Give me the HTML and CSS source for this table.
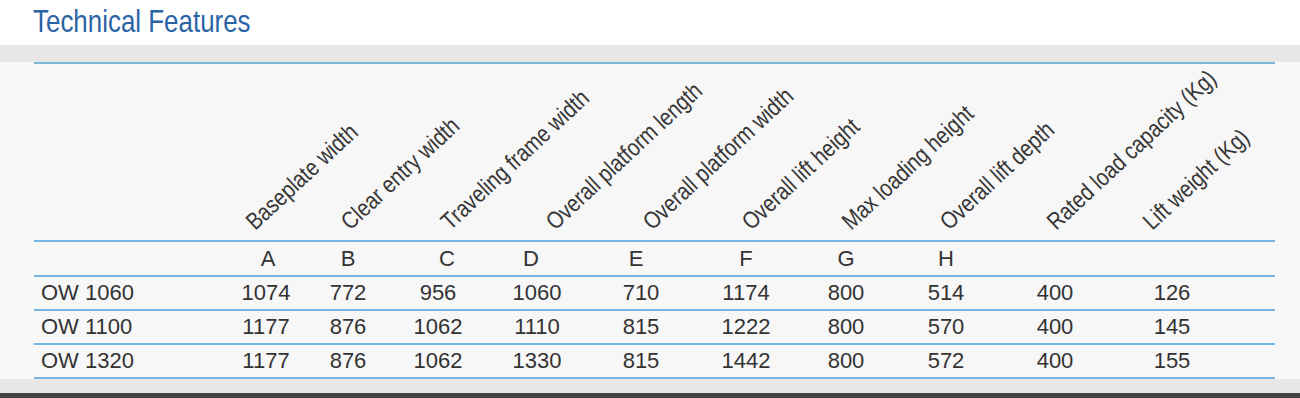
FILE: index.html
```html
<!DOCTYPE html>
<html lang="en">
<head>
<meta charset="utf-8">
<title>Technical Features</title>
<link rel="stylesheet" href="styles.css">
</head>
<body>
<header class="top">
  <h1 class="title"><span class="title-text">Technical Features</span></h1>
</header>
<div class="band"></div>
<section class="sheet">
  <div class="table">
    <div class="labels">
      <div class="label-cell"><span class="label">Baseplate width</span></div>
      <div class="label-cell"><span class="label">Clear entry width</span></div>
      <div class="label-cell"><span class="label">Traveling frame width</span></div>
      <div class="label-cell"><span class="label">Overall platform length</span></div>
      <div class="label-cell"><span class="label">Overall platform width</span></div>
      <div class="label-cell"><span class="label">Overall lift height</span></div>
      <div class="label-cell"><span class="label">Max loading height</span></div>
      <div class="label-cell"><span class="label">Overall lift depth</span></div>
      <div class="label-cell"><span class="label">Rated load capacity (Kg)</span></div>
      <div class="label-cell"><span class="label">Lift weight (Kg)</span></div>
    </div>
    <div class="row letters">
      <div class="cell name"></div>
      <div class="cell letter-a">A</div>
      <div class="cell">B</div>
      <div class="cell letter-c">C</div>
      <div class="cell letter-d">D</div>
      <div class="cell letter-e">E</div>
      <div class="cell">F</div>
      <div class="cell">G</div>
      <div class="cell">H</div>
      <div class="cell"></div>
      <div class="cell"></div>
      <div class="cell"></div>
    </div>
    <div class="row">
      <div class="cell name">OW 1060</div>
      <div class="cell">1074</div>
      <div class="cell">772</div>
      <div class="cell">956</div>
      <div class="cell">1060</div>
      <div class="cell">710</div>
      <div class="cell">1174</div>
      <div class="cell">800</div>
      <div class="cell">514</div>
      <div class="cell">400</div>
      <div class="cell">126</div>
      <div class="cell"></div>
    </div>
    <div class="row">
      <div class="cell name">OW 1100</div>
      <div class="cell">1177</div>
      <div class="cell">876</div>
      <div class="cell">1062</div>
      <div class="cell">1110</div>
      <div class="cell">815</div>
      <div class="cell">1222</div>
      <div class="cell">800</div>
      <div class="cell">570</div>
      <div class="cell">400</div>
      <div class="cell">145</div>
      <div class="cell"></div>
    </div>
    <div class="row">
      <div class="cell name">OW 1320</div>
      <div class="cell">1177</div>
      <div class="cell">876</div>
      <div class="cell">1062</div>
      <div class="cell">1330</div>
      <div class="cell">815</div>
      <div class="cell">1442</div>
      <div class="cell">800</div>
      <div class="cell">572</div>
      <div class="cell">400</div>
      <div class="cell">155</div>
      <div class="cell"></div>
    </div>
  </div>
</section>
<div class="band band-bottom"></div>
<div class="footer-bar"></div>
</body>
</html>
```
FILE: styles.css
```css
* { box-sizing: border-box; }

html, body {
  margin: 0;
  padding: 0;
}

body {
  background: #f7f7f7;
  font-family: "Liberation Sans", Arial, sans-serif;
  color: #333;
  overflow: hidden;
}

.top {
  background: #ffffff;
  height: 45px;
  padding-left: 33px;
}

.title {
  margin: 0;
  font-family: "Liberation Sans", Arial, sans-serif;
  font-weight: normal;
  font-size: 32px;
  line-height: 42px;
  color: #2a64a5;
}

.title-text {
  display: inline-block;
  white-space: nowrap;
  transform-origin: 0 50%;
  transform: scaleX(0.81);
}

.band {
  background: #e8e7e5;
  height: 17px;
}

.band-bottom {
  height: 14px;
}

.footer-bar {
  background: #454545;
  height: 6px;
}

.sheet {
  background: #f7f7f7;
  padding: 0 25px 0 34px;
}

.table {
  border-top: 2px solid #7db5d8;
}

.labels {
  height: 178px;
  border-bottom: 2px solid #74b3e2;
  display: grid;
  grid-template-columns: 95px 100px 105px 97px 99px 100px 98px 107px 96px 1fr;
  padding-left: 224px;
  align-items: end;
  padding-bottom: 6px;
}

.label-cell {
  height: 0;
  position: relative;
}

.label {
  display: inline-block;
  white-space: nowrap;
  font-family: "Liberation Sans", Arial, sans-serif;
  font-size: 24px;
  line-height: 1;
  color: #363636;
  transform-origin: 0 100%;
  transform: translateY(-100%) rotate(-43deg) scaleX(0.84);
}

.row {
  display: grid;
  grid-template-columns: 191px 82px 82px 98px 100px 108px 102px 98px 102px 116px 118px 1fr;
  height: 34px;
  border-bottom: 2px solid #74b3e2;
  align-items: center;
  font-size: 22px;
}

.letters {
  height: 35px;
}

.cell {
  text-align: center;
  line-height: 1;
}

.cell.name {
  text-align: left;
  padding-left: 7px;
}

.letter-a { padding-left: 4px; }
.letter-c { padding-left: 18px; }
.letter-d { padding-right: 12px; }
.letter-e { padding-right: 10px; }
```
